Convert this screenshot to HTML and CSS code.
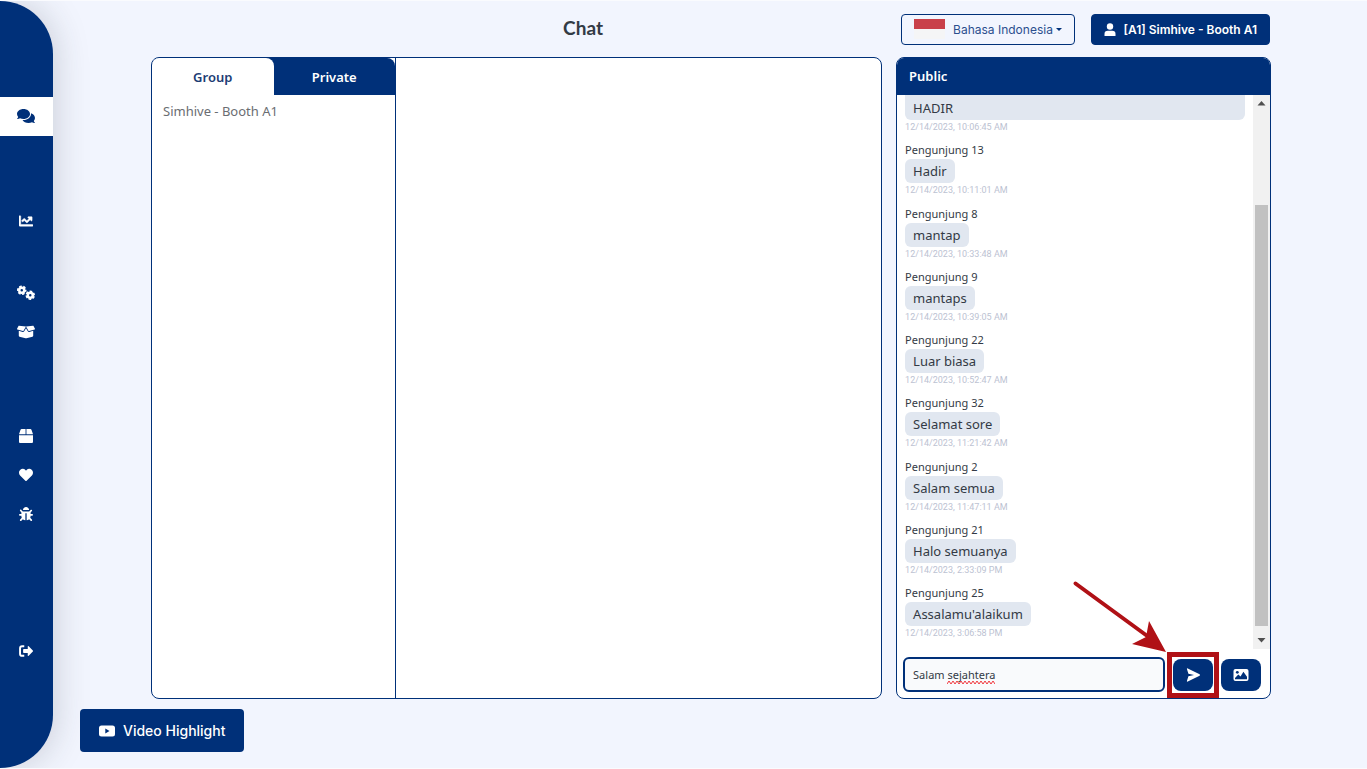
FILE: index.html
```html
<!DOCTYPE html>
<html lang="id">
<head>
<meta charset="utf-8">
<title>Chat</title>
<meta name="viewport" content="width=device-width, initial-scale=1">
<link rel="stylesheet" href="styles.css">
</head>
<body>
<nav class="sidebar" aria-label="Menu">
  <div class="nav-group">
    <a class="nav-item active" href="#" aria-label="Chat"><svg class="icon wide" viewBox="0 0 576 512"><path d="M416 192c0-88.400-93.100-160-208-160S0 103.600 0 192c0 34.300 14.100 65.900 38 92-13.400 30.200-35.500 54.200-35.800 54.500-2.200 2.300-2.800 5.700-1.500 8.700S4.800 352 8 352c36.600 0 66.900-12.300 88.700-25 32.200 15.700 70.300 25 111.300 25 114.900 0 208-71.600 208-160zm122 220c23.900-26 38-57.700 38-92 0-66.900-53.500-124.200-129.300-148.100.9 6.600 1.300 13.300 1.300 20.100 0 105.900-107.700 192-240 192-10.800 0-21.300-.8-31.700-1.900C207.800 439.600 281.800 480 368 480c41 0 79.100-9.200 111.300-25 21.800 12.700 52.100 25 88.700 25 3.200 0 6.100-1.900 7.300-4.800 1.300-2.900.7-6.300-1.500-8.700-.3-.3-22.400-24.200-35.800-54.500z"/></svg></a>
  </div>
  <div class="nav-group">
    <a class="nav-item" href="#" aria-label="Statistik"><svg class="icon" viewBox="0 0 512 512"><path stroke="#fff" stroke-width="16" d="M496 384H64V80c0-8.840-7.160-16-16-16H16C7.160 64 0 71.160 0 80v336c0 17.670 14.330 32 32 32h464c8.840 0 16-7.160 16-16v-32c0-8.840-7.160-16-16-16zM464 96H345.940c-21.380 0-32.090 25.850-16.970 40.970l32.400 32.400L288 242.750l-73.370-73.370c-12.500-12.500-32.760-12.500-45.250 0l-68.690 68.690c-6.250 6.250-6.250 16.380 0 22.630l22.620 22.620c6.250 6.250 16.380 6.250 22.630 0L192 237.250l73.370 73.370c12.500 12.500 32.760 12.500 45.250 0l96-96 32.400 32.400c15.120 15.120 40.970 4.410 40.970-16.970V112c.01-8.840-7.150-16-15.990-16z"/></svg></a>
  </div>
  <div class="nav-group near">
    <a class="nav-item" href="#" aria-label="Pengaturan"><svg class="icon wide" viewBox="0 1 36 31"><g fill="none" stroke="#fff"><circle cx="9.500" cy="11" r="5" stroke-width="5"/><circle cx="9.500" cy="11" r="8" stroke-width="3" stroke-dasharray="5.200 3.178" stroke-dashoffset="2"/><circle cx="26.500" cy="21" r="5" stroke-width="5"/><circle cx="26.500" cy="21" r="8" stroke-width="3" stroke-dasharray="5.200 3.178" stroke-dashoffset="-2"/></g></svg></a>
    <a class="nav-item" href="#" aria-label="Produk"><svg class="icon wide" viewBox="0 0 640 512"><path d="M425.700 256c-16.900 0-32.800-9-41.400-23.400L320 126l-64.200 106.600c-8.700 14.500-24.600 23.500-41.500 23.500-4.500 0-9-.6-13.300-1.900L64 215v178c0 14.700 10 27.500 24.200 31l216.200 54.100c10.200 2.500 20.900 2.500 31 0L551.800 424c14.200-3.600 24.200-16.400 24.200-31V215l-137 39.100c-4.300 1.300-8.800 1.900-13.300 1.900zm212.600-112.200L586.800 41c-3.100-6.200-9.800-9.800-16.700-8.900L320 64l91.700 152.100c3.800 6.300 11.400 9.300 18.500 7.300l197.900-56.500c9.900-2.900 14.700-13.900 10.200-23.100zM53.200 41L1.700 143.800c-4.600 9.200.3 20.200 10.100 23l197.900 56.500c7.100 2 14.700-1 18.500-7.300L320 64 69.800 32.100c-6.900-.8-13.500 2.700-16.600 8.900z"/></svg></a>
  </div>
  <div class="nav-group">
    <a class="nav-item" href="#" aria-label="Paket"><svg class="icon" viewBox="0 0 512 512"><path d="M509.500 184.600L458.900 32.800C452.400 13.200 434.100 0 413.400 0H272v192h238.700c-.4-2.500-.4-5-1.200-7.400zM240 0H98.600c-20.700 0-39 13.200-45.500 32.800L2.500 184.600c-.8 2.400-.8 4.900-1.200 7.400H240V0zM0 224v240c0 26.500 21.500 48 48 48h416c26.500 0 48-21.500 48-48V224H0z"/></svg></a>
    <a class="nav-item" href="#" aria-label="Favorit"><svg class="icon" viewBox="0 0 512 512"><path d="M462.300 62.600C407.500 15.900 326 24.300 275.700 76.200L256 96.500l-19.700-20.300C186.100 24.300 104.500 15.900 49.700 62.600c-62.800 53.600-66.100 149.800-9.900 207.900l193.500 199.800c12.500 12.900 32.800 12.900 45.300 0l193.500-199.800c56.300-58.100 53-154.300-9.800-207.900z"/></svg></a>
    <a class="nav-item" href="#" aria-label="Laporkan masalah"><svg class="icon" viewBox="0 0 512 512"><path d="M511.988 288.900c-.478 17.430-15.217 31.100-32.653 31.100H424v16c0 21.864-4.882 42.584-13.600 61.145l60.228 60.228c12.496 12.497 12.496 32.758 0 45.255-12.498 12.497-32.759 12.496-45.256 0l-54.736-54.736C345.886 467.965 314.351 480 280 480V236c0-6.627-5.373-12-12-12h-24c-6.627 0-12 5.373-12 12v244c-34.351 0-65.886-12.035-90.636-32.108l-54.736 54.736c-12.498 12.497-32.759 12.496-45.256 0-12.496-12.497-12.496-32.758 0-45.255l60.228-60.228C92.882 378.584 88 357.864 88 336v-16H32.666C15.230 320 .491 306.330.013 288.900-.484 270.816 13.958 256 31.999 256h56v-58.745l-46.628-46.628c-12.496-12.497-12.496-32.758 0-45.255 12.498-12.497 32.758-12.497 45.256 0L141.255 160h229.489l54.627-54.627c12.498-12.497 32.758-12.497 45.256 0 12.496 12.497 12.496 32.758 0 45.255L424 197.255V256h56c18.041 0 32.483 14.816 31.988 32.900zM257 0c-61.856 0-112 50.144-112 112h224C369 50.144 318.856 0 257 0z"/></svg></a>
  </div>
  <div class="nav-group far">
    <a class="nav-item" href="#" aria-label="Keluar"><svg class="icon" viewBox="0 0 16 16"><path d="M6 2.500H3.500Q1.200 2.500 1.200 5v6q0 2.500 2.300 2.500H6" fill="none" stroke="#fff" stroke-width="2.200"/><path d="M5.500 5.800H10V3q0-1.200 1.100-.4l4.700 4.800q.5.600 0 1.200L11.100 13.400q-1.100.8-1.100-.4v-2.800H5.500q-.8 0-.8-.8V6.600q0-.8.8-.8z"/></svg></a>
  </div>
</nav>

<main class="page">
  <header class="topbar">
    <h1 class="title">Chat</h1>
    <div class="controls">
      <button class="lang" type="button"><span class="flag"></span>Bahasa Indonesia<span class="caret"></span></button>
      <button class="user" type="button"><svg class="user-icon" viewBox="0 0 12 13"><circle cx="6" cy="3.500" r="3.200"/><path d="M.5 13v-2q0-3.200 3.300-3.200h4.400q3.300 0 3.300 3.200v2z"/></svg>[A1] Simhive - Booth A1</button>
    </div>
  </header>

  <div class="panels">
    <section class="panel rooms">
      <div class="room-list">
        <div class="tabs">
          <button class="tab selected" type="button">Group</button>
          <button class="tab" type="button">Private</button>
        </div>
        <a class="room" href="#">Simhive - Booth A1</a>
      </div>
      <div class="conversation"></div>
    </section>

    <section class="panel public">
      <h2 class="public-head">Public</h2>
      <div class="feed">
        <div class="messages">
          <article class="message"><p class="bubble cut">HADIR</p><time class="time">12/14/2023, 10:06:45 AM</time></article>
          <article class="message"><h3 class="name">Pengunjung 13</h3><p class="bubble">Hadir</p><time class="time">12/14/2023, 10:11:01 AM</time></article>
          <article class="message"><h3 class="name">Pengunjung 8</h3><p class="bubble">mantap</p><time class="time">12/14/2023, 10:33:48 AM</time></article>
          <article class="message"><h3 class="name">Pengunjung 9</h3><p class="bubble">mantaps</p><time class="time">12/14/2023, 10:39:05 AM</time></article>
          <article class="message"><h3 class="name">Pengunjung 22</h3><p class="bubble">Luar biasa</p><time class="time">12/14/2023, 10:52:47 AM</time></article>
          <article class="message"><h3 class="name">Pengunjung 32</h3><p class="bubble">Selamat sore</p><time class="time">12/14/2023, 11:21:42 AM</time></article>
          <article class="message"><h3 class="name">Pengunjung 2</h3><p class="bubble">Salam semua</p><time class="time">12/14/2023, 11:47:11 AM</time></article>
          <article class="message"><h3 class="name">Pengunjung 21</h3><p class="bubble">Halo semuanya</p><time class="time">12/14/2023, 2:33:09 PM</time></article>
          <article class="message"><h3 class="name">Pengunjung 25</h3><p class="bubble">Assalamu'alaikum</p><time class="time">12/14/2023, 3:06:58 PM</time></article>
        </div>
        <div class="scrollbar" aria-hidden="true">
          <svg class="scroll-arrow" viewBox="0 0 17 17"><path d="M4.500 10.500h8L8.500 6z"/></svg>
          <div class="track"><div class="thumb"></div></div>
          <svg class="scroll-arrow" viewBox="0 0 17 17"><path d="M4.500 6h8l-4 4.500z"/></svg>
        </div>
      </div>
      <form class="composer">
        <div class="field">
          <input class="field-input" type="text" aria-label="Pesan" value="Salam sejahtera" spellcheck="false">
          <svg class="squiggle" viewBox="0 0 48 5"><path d="M0 4l2-3 2 3 2-3 2 3 2-3 2 3 2-3 2 3 2-3 2 3 2-3 2 3 2-3 2 3 2-3 2 3 2-3 2 3 2-3 2 3 2-3 2 3 2-3 2 3"/></svg>
        </div>
        <div class="send-wrap">
          <button class="action" type="button" aria-label="Kirim"><svg class="action-icon" viewBox="0 0 16 16"><path d="M2 2.200Q1.600 1 2.800 1.500L14.600 7.300q.9.700 0 1.400L2.800 14.500q-1.200.5-.8-.7L3.400 9.200 9 8 3.400 6.800z"/></svg></button>
          <span class="highlight"></span>
          <svg class="pointer" viewBox="0 0 94 72"><path d="M3.500 3.500L78 58" fill="none" stroke="#b01116" stroke-width="4" stroke-linecap="round"/><path d="M94 72L60 64l14-7 3-16z" fill="#b01116"/></svg>
        </div>
        <button class="action" type="button" aria-label="Gambar"><svg class="action-icon" viewBox="0 0 16 16"><rect x=".5" y="2" width="15" height="12" rx="2"/><g fill="#003079"><circle cx="4.300" cy="5.300" r="1.400"/><path d="M2 12.300V11l3.300-3.500 2.200 2 2.900-4.700 3.600 5v2.500z"/></g></svg></button>
      </form>
    </section>
  </div>

  <footer class="bottom">
    <button class="video" type="button"><svg class="video-icon" viewBox="0 0 16 12"><path fill-rule="evenodd" d="M2.500.5h11Q16 .5 16 3v6q0 2.500-2.500 2.500h-11Q0 11.500 0 9V3Q0 .5 2.500.5zM6.300 3.600v4.800L10.500 6z"/></svg>Video Highlight</button>
  </footer>
</main>
</body>
</html>
```
FILE: styles.css
```css
* { box-sizing: border-box; }

body {
  margin: 0;
  min-height: 100vh;
  display: flex;
  border-top: 1px solid #fafbfe;
  border-bottom: 1px solid #fafbfe;
  background: #f2f5fe;
  font-family: "Noto Sans", "Open Sans", sans-serif;
  color: #333a45;
}

button, input { font: inherit; }
button { cursor: pointer; }
a { text-decoration: none; }
h1, h2, h3, p { margin: 0; }
svg { display: block; fill: currentColor; }

/* Sidebar */
.sidebar {
  width: 53px;
  flex: none;
  padding-top: 96px;
  background: #003079;
  border-radius: 0 53px 53px 0;
  box-shadow: 0 0 36px rgba(40, 50, 60, 0.22);
}
.nav-group { margin-bottom: 66px; }
.nav-group:nth-child(2) { margin-bottom: 33px; }
.nav-group.near { margin-bottom: 65px; }
.nav-group.far { margin-top: 98px; }
.nav-item {
  height: 39px;
  display: flex;
  align-items: center;
  justify-content: center;
  padding: 0 1px 1px 0;
  color: #fff;
}
.nav-item.active { background: #fff; color: #003079; }
.icon { width: 14px; height: 14px; }
.icon.wide { width: 18px; height: 16px; }

/* Page frame */
.page {
  flex: 1;
  min-width: 0;
  display: flex;
  flex-direction: column;
  padding: 0 96px 16px 27px;
}
.topbar, .panels {
  display: grid;
  grid-template-columns: 39fr 20fr;
  gap: 14px;
  margin-left: 71px;
}
.topbar {
  height: 56px;
  align-items: center;
  font-family: Inter, sans-serif;
}
.title {
  padding: 0 0 4px 133px;
  text-align: center;
  font-family: Lato, sans-serif;
  font-size: 19px;
  font-weight: 700;
}
.controls {
  display: flex;
  justify-content: space-between;
  padding: 0 1px 0 5px;
}
.lang, .user {
  height: 31px;
  display: flex;
  align-items: center;
  border: 1px solid #003079;
  border-radius: 4px;
  padding: 0 12px;
  font-size: 12px;
  white-space: nowrap;
}
.lang { background: transparent; color: #2b4f8e; }
.flag {
  width: 31px;
  height: 20px;
  margin-right: 8px;
  background: linear-gradient(#c9404a 50%, #f5f5f6 50%);
}
.caret {
  margin-left: 3px;
  border: 3px solid transparent;
  border-top-color: #003079;
  border-bottom: 0;
}
.user { background: #003079; color: #fff; font-weight: 600; }
.user-icon { width: 12px; height: 13px; margin-right: 8px; }

/* Panels */
.panels { flex: 1; }
.panel {
  display: flex;
  overflow: hidden;
  background: #fff;
  border: 1px solid #003079;
  border-radius: 8px;
}
.room-list { width: 244px; border-right: 1px solid #003079; }
.tabs {
  display: flex;
  background: #003079;
  border-radius: 0 8px 0 0;
}
.tab {
  flex: 1;
  height: 37px;
  padding: 0;
  border: 0;
  background: transparent;
  color: #fff;
  font-size: 13px;
  font-weight: 600;
}
.tab.selected {
  background: #fff;
  color: #1c3c74;
  border-radius: 0 8px 0 0;
}
.room {
  display: block;
  padding: 6px 11px;
  font-size: 13px;
  line-height: 20px;
  color: #6a6d72;
}
.conversation { flex: 1; }

/* Public chat */
.public { flex-direction: column; }
.public-head {
  height: 37px;
  padding-left: 12px;
  background: #003079;
  color: #fff;
  font-size: 13px;
  font-weight: 600;
  line-height: 37px;
}
.feed { flex: 1; display: flex; }
.messages {
  flex: 1;
  display: flex;
  flex-direction: column;
  justify-content: space-between;
  padding: 0 8px 9px;
}
.name { font-size: 11px; font-weight: 400; line-height: 18px; }
.bubble {
  width: fit-content;
  padding: 0 8px;
  background: #e1e7f0;
  border-radius: 6px;
  font-size: 13px;
  line-height: 24px;
}
.bubble.cut {
  width: auto;
  padding-top: 1px;
  border-radius: 0 0 6px 6px;
}
.time {
  display: block;
  color: #bcc2d2;
  font-family: Roboto, sans-serif;
  font-size: 9px;
  line-height: 14px;
}
.scrollbar {
  width: 17px;
  display: flex;
  flex-direction: column;
  background: #f1f1f1;
  color: #505050;
}
.scroll-arrow { width: 17px; height: 17px; }
.track {
  flex: 1;
  display: flex;
  flex-direction: column;
  justify-content: flex-end;
  padding: 0 2px 6px;
}
.thumb { height: 82%; background: #c1c1c1; }

.composer {
  display: flex;
  align-items: center;
  gap: 8px;
  padding: 8px 9px 6px 6px;
}
.field { flex: 1; position: relative; }
.field-input {
  display: block;
  width: 100%;
  height: 35px;
  padding: 0 8px;
  border: 2px solid #003079;
  border-radius: 6px;
  background: #f9fafc;
  color: #333a45;
  font-size: 11px;
}
.squiggle {
  position: absolute;
  left: 44px;
  bottom: 7px;
  width: 48px;
  height: 5px;
  fill: none;
  stroke: #f0393f;
}
.send-wrap { position: relative; }
.action {
  width: 40px;
  height: 32px;
  display: flex;
  align-items: center;
  justify-content: center;
  padding: 0;
  border: 0;
  border-radius: 8px;
  background: #003079;
  color: #fff;
}
.action-icon { width: 16px; height: 16px; }
.highlight {
  position: absolute;
  inset: -7px -6px;
  border: 5px solid #b01116;
  pointer-events: none;
}
.pointer {
  position: absolute;
  right: 47px;
  bottom: 39px;
  width: 94px;
  height: 72px;
  pointer-events: none;
}

.bottom { padding-top: 10px; }
.video {
  height: 43px;
  display: flex;
  align-items: center;
  gap: 8px;
  padding: 0 19px;
  border: 0;
  border-radius: 4px;
  background: #003079;
  color: #fff;
  font-family: Inter, sans-serif;
  font-size: 14px;
  font-weight: 500;
}
.video-icon { width: 16px; height: 12px; }
```
